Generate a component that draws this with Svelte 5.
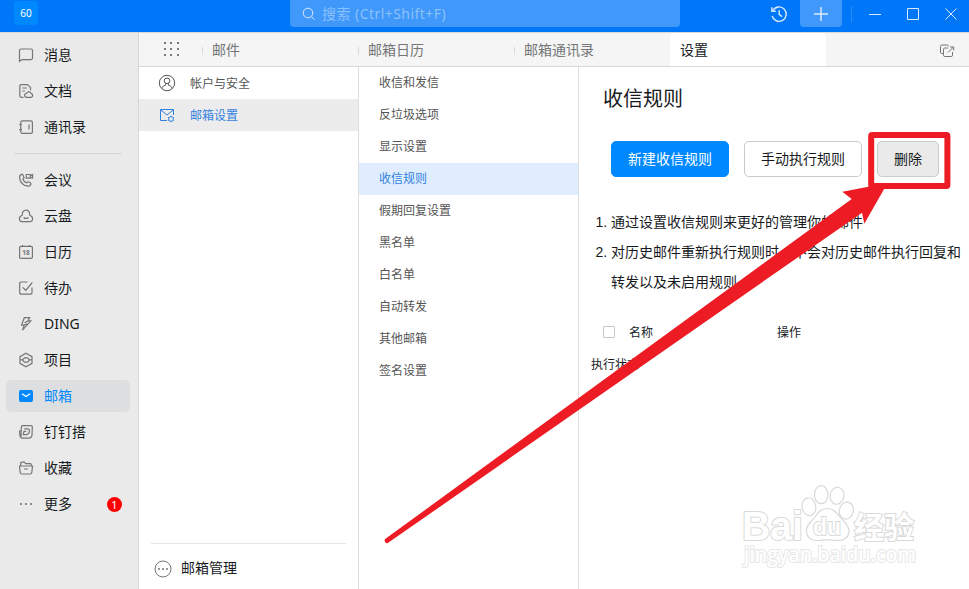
<script>
	const mainNav = [
		{ id: 'message', label: '消息' },
		{ id: 'doc', label: '文档' },
		{ id: 'contacts', label: '通讯录' }
	];

	const appNav = [
		{ id: 'meeting', label: '会议' },
		{ id: 'drive', label: '云盘' },
		{ id: 'calendar', label: '日历' },
		{ id: 'todo', label: '待办' },
		{ id: 'ding', label: 'DING' },
		{ id: 'project', label: '项目' },
		{ id: 'mail', label: '邮箱' },
		{ id: 'dingda', label: '钉钉搭' },
		{ id: 'favorite', label: '收藏' },
		{ id: 'more', label: '更多', badge: 1 }
	];

	const tabs = ['邮件', '邮箱日历', '邮箱通讯录', '设置'];

	const settings = [
		'收信和发信',
		'反垃圾选项',
		'显示设置',
		'收信规则',
		'假期回复设置',
		'黑名单',
		'白名单',
		'自动转发',
		'其他邮箱',
		'签名设置'
	];

	let activeNav = $state('mail');
	let activeTab = $state('设置');
	let activeSetting = $state('收信规则');
	let checked = $state(false);
</script>

{#snippet navIcon(id)}
	<svg class="nav-icon" viewBox="0 0 16 16" width="16" height="16">
		{#if id === 'message'}
			<path d="M1.5 14.3V3.5a1.5 1.5 0 0 1 1.5-1.5h10a1.5 1.5 0 0 1 1.5 1.5v7.6a1.5 1.5 0 0 1-1.5 1.5H4.2z" />
		{:else if id === 'doc'}
			<path d="M5.5 14.3H3.2a1.4 1.4 0 0 1-1.4-1.4V3a1.4 1.4 0 0 1 1.4-1.4h6.3l3 2.8v2.8M4.3 5h4.6M4.3 8h2.6" />
			<path d="M8.6 14.3a2 2 0 0 1 0-4 2.5 2.5 0 0 1 4.6.3 1.9 1.9 0 0 1 0 3.7z" />
		{:else if id === 'contacts'}
			<rect x="2.8" y="1.8" width="11.6" height="12.6" rx="1.6" />
			<path d="M11 5.6v5M1.2 5.5h2.6M1.2 10.6h2.6" />
		{:else if id === 'meeting'}
			<path d="M3.5 2.2c-1.5.8-2.2 2.2-1.8 4.1.7 4 3.8 7 7.7 7.8 1.6.2 3-.5 3.5-1.8.2-.5 0-.9-.4-1.2l-1.7-1.1c-.6-.4-1.1-.2-1.5.2l-.6.7C7 10.2 5.5 8.8 4.9 7.2l.8-.8c.4-.4.4-.9.1-1.4l-1-2.2c-.3-.6-.8-.8-1.3-.6z" />
			<path d="M8.3 2.5h4v3.6h-4zM12.3 3.8l2.3-1.2v3.5l-2.3-1" />
		{:else if id === 'drive'}
			<path d="M4.2 7.2C4.2 4 5.7 2.1 8 2.1s3.8 1.9 3.8 5.1c1.8.6 2.8 1.8 2.8 3.5 0 2-1.3 3-3.2 3H4.6c-1.9 0-3.2-1-3.2-3 0-1.7 1-2.9 2.8-3.5z" />
			<path d="M5.7 9.5c1.2 1.3 3.4 1.3 4.6 0" />
		{:else if id === 'calendar'}
			<rect x="1.6" y="2.4" width="12.8" height="12" rx="1.2" />
			<path d="M4.5 1v2M11.5 1v2" />
			<text x="8" y="11">18</text>
		{:else if id === 'todo'}
			<path d="M9.5 2H3a1.3 1.3 0 0 0-1.3 1.3v9.5A1.3 1.3 0 0 0 3 14.1h9.7a1.3 1.3 0 0 0 1.3-1.3V7.5M4.8 7.3l3 3 6.5-7.8" />
		{:else if id === 'ding'}
			<path d="M6.3 1.7h5.4L9.8 4.9h3L4.5 14.2l1.7-5.1H3.6zM9.8 4.9 6.600 6.700M6.200 9.100l2.800-1.300" />
		{:else if id === 'project'}
			<path d="M8 1.3 14 4.7v6.6L8 14.7 2 11.3V4.7zM2 7.5l2.7.5M14 7.5l-2.7.5" />
			<path d="M4.3 8 6.5 5.8h3L11.7 8 9.5 10.2h-3z" />
		{:else if id === 'mail'}
			<rect class="solid" x="1" y="2" width="14" height="12" rx="2" />
			<path class="flap" d="m4 5.7 4 2.8 4-2.8" />
		{:else if id === 'dingda'}
			<path d="M4.500 1.600h8.500a1.300 1.300 0 0 1 1.300 1.500l-.3 7.800a3.300 3.300 0 0 1-3.300 3.300H4.200a1.300 1.300 0 0 1-1.200-1.400l.4-10.100a1.100 1.100 0 0 1 1.100-1.100M3 13.500c-.7-.3-.9-.8-1-1.500l-.5-4.500c0-.6.400-.9 1.500-.9" />
			<path d="M6.200 4.800h3c2 0 2.600 1.200 2.200 2.900-.4 1.800-1.500 3-3.300 3H5.200l.8-3.300h2.300" />
		{:else if id === 'favorite'}
			<path d="M2.7 6V3.2c0-.7.4-1.1 1.1-1.1h2.5l1.4 1.5h4.5c.7 0 1.1.4 1.1 1.1V6" />
			<path d="M1.5 6h13l-.7 6.5c-.1 1-.7 1.5-1.6 1.5H3.8c-.9 0-1.5-.5-1.6-1.5zM6 9h4" />
		{:else if id === 'more'}
			<g class="dots"><circle cx="3" cy="8" r="1.1" /><circle cx="8" cy="8" r="1.1" /><circle cx="13" cy="8" r="1.1" /></g>
		{/if}
	</svg>
{/snippet}

{#snippet navItem(item)}
	<button class="nav-item" class:active={activeNav === item.id} onclick={() => (activeNav = item.id)}>
		{@render navIcon(item.id)}
		<span>{item.label}</span>
		{#if item.badge}
			<i class="badge">{item.badge}</i>
		{/if}
	</button>
{/snippet}

<div class="window">
	<header>
		<div class="logo">60</div>
		<div class="search">
			<svg viewBox="0 0 14 14" width="14" height="14">
				<circle cx="6" cy="6" r="4.8" />
				<path d="m9.5 9.7 3 3" />
			</svg>
			<span>搜索 (Ctrl+Shift+F)</span>
		</div>
		<div class="controls">
			<svg class="history" viewBox="0 0 18 18" width="18" height="18">
				<path d="M3 5.2A7.2 7.2 0 1 1 2.1 11M1.8 2.2v4h4M9.2 5.3v4l2.8 2.3" />
			</svg>
			<button class="add" aria-label="add">
				<svg viewBox="0 0 14 14" width="14" height="14"><path d="M7 0v14M0 7h14" /></svg>
			</button>
			<span class="split"></span>
			<svg class="win" viewBox="0 0 12 12" width="12" height="12"><path d="M0 6.5h12" /></svg>
			<svg class="win" viewBox="0 0 12 12" width="12" height="12"><path d="M.5.5h11v11H.5z" /></svg>
			<svg class="win" viewBox="0 0 12 12" width="12" height="12"><path d="m.5.5 11 11M11.5.5l-11 11" /></svg>
		</div>
	</header>

	<div class="body">
		<nav>
			{#each mainNav as item}
				{@render navItem(item)}
			{/each}
			<hr />
			{#each appNav as item}
				{@render navItem(item)}
			{/each}
		</nav>

		<div class="workspace">
			<div class="tabs">
				<div class="apps">
					<svg viewBox="0 0 15 14" width="15" height="14">
						{#each [0, 6, 12] as y}
							{#each [0, 6, 13] as x}
								<rect {x} {y} width="2" height="2" />
							{/each}
						{/each}
					</svg>
				</div>
				{#each tabs as tab}
					<button class="tab" class:active={activeTab === tab} onclick={() => (activeTab = tab)}>{tab}</button>
				{/each}
				<svg class="popout" viewBox="0 0 16 14" width="16" height="14">
					<path d="M4 9.5H2.8a1.3 1.3 0 0 1-1.3-1.3V2.3A1.3 1.3 0 0 1 2.8 1h5.4a1.3 1.3 0 0 1 1.3 1.3" />
					<path d="M9 4H5.8a1.3 1.3 0 0 0-1.3 1.3v6a1.3 1.3 0 0 0 1.3 1.2h6.4a1.3 1.3 0 0 0 1.3-1.3V8M9 8.5 14.5 3M11 3h3.7v3.5" />
				</svg>
			</div>

			<div class="columns">
				<aside class="accounts">
					<button class="row">
						<svg viewBox="0 0 18 18" width="18" height="18">
							<circle cx="9" cy="9" r="7.7" />
							<circle cx="9" cy="6.8" r="2.8" />
							<path d="M4 14.500c.3-2 1.500-2.800 3.600-3.300v-2M14 14.500c-.3-2-1.500-2.800-3.600-3.300v-2" />
						</svg>
						<span>帐户与安全</span>
					</button>
					<button class="row active">
						<svg viewBox="0 0 18 18" width="18" height="18">
							<path d="M9 14.500H2.500V3.500h13v5.500M2.800 4l6.200 5 6.200-5" />
							<circle cx="13" cy="13" r="2.4" />
							<path d="M13 9.800v.8M13 15.400v.8M10.200 11.400l.7.400M15.100 14.200l.7.400M10.200 14.600l.7-.4M15.100 11.800l.7-.4" />
						</svg>
						<span>邮箱设置</span>
					</button>
					<div class="manage">
						<svg viewBox="0 0 18 18" width="18" height="18">
							<circle cx="9" cy="9" r="8" />
							<g class="dots"><circle cx="5" cy="9" r="1" /><circle cx="9" cy="9" r="1" /><circle cx="13" cy="9" r="1" /></g>
						</svg>
						<span>邮箱管理</span>
					</div>
				</aside>

				<aside class="settings">
					{#each settings as item}
						<button class:active={activeSetting === item} onclick={() => (activeSetting = item)}>{item}</button>
					{/each}
				</aside>

				<main>
					<h1>收信规则</h1>
					<div class="actions">
						<button class="primary">新建收信规则</button>
						<button>手动执行规则</button>
						<button class="disabled">删除</button>
					</div>
					<ol>
						<li>通过设置收信规则来更好的管理你的邮件</li>
						<li>对历史邮件重新执行规则时，不会对历史邮件执行回复和转发以及未启用规则。</li>
					</ol>
					<div class="table-head">
						<input type="checkbox" bind:checked />
						<span class="name">名称</span>
						<span>操作</span>
					</div>
					<div class="status">执行状态</div>
				</main>
			</div>
		</div>
	</div>

	<!-- watermark and pointer drawn over the page -->
	<svg class="overlay" viewBox="0 0 969 589" width="969" height="589">
		<g class="watermark">
			<text class="latin" x="742" y="540" font-size="40" textLength="61" lengthAdjust="spacingAndGlyphs">Bai</text>
			<ellipse cx="809" cy="506.700" rx="6.800" ry="9" transform="rotate(-8 809 507)" />
			<ellipse cx="821.2" cy="494.7" rx="6.800" ry="9" />
			<ellipse cx="837" cy="495.7" rx="6.900" ry="8.600" transform="rotate(10 837 496)" />
			<ellipse cx="846.500" cy="510.500" rx="7" ry="8.500" transform="rotate(14 846 510)" />
			<path d="M827 508.500c-6 0-9 4-12 8.500-4 5-9 8-8.500 14.500.5 6.500 5 9 11 9 4 0 6-.8 9.500-.8s6 .8 10 .8c7 0 11.500-3 12-9 .5-6-5-9.500-9-14.500-3.500-4.500-6.500-8.500-13-8.500z" />
			<text class="latin" x="813" y="535" font-size="24" textLength="28" lengthAdjust="spacingAndGlyphs">du</text>
			<text class="cjk" x="854" y="537.500" font-size="30">经验</text>
			<text class="site" x="744" y="562" font-size="21" textLength="172" lengthAdjust="spacingAndGlyphs">jingyan.baidu.com</text>
		</g>
		<path class="arrow" d="M385.800 538.600 851.700 199 842.300 191.700 868.300 186.800 885.500 184 884.700 188 864.300 223.700 862 212.700 388.500 542.600A2.400 2.400 0 0 1 385.800 538.600z" />
		<rect class="frame" x="871.2" y="135" width="76.2" height="51" rx="1" />
	</svg>
</div>

<style>
	:global(body) {
		margin: 0;
		overflow: hidden;
	}

	.window {
		position: relative;
		display: flex;
		flex-direction: column;
		width: 969px;
		height: 589px;
		background: #fff;
		color: #171a1d;
		font-family: 'Noto Sans', 'Noto Sans CJK SC', sans-serif;
		font-size: 14px;
		overflow: hidden;
	}

	button {
		border: 0;
		padding: 0;
		background: none;
		color: inherit;
		font: inherit;
		text-align: left;
	}

	svg {
		flex: none;
		fill: none;
		stroke: currentColor;
	}

	/* Title bar */
	header {
		flex: none;
		display: flex;
		align-items: flex-start;
		height: 32px;
		border-bottom: 1px solid #d6d9dd;
		background: #0076f8;
		color: #d9eafe;
	}

	.logo {
		flex: none;
		width: 24px;
		height: 24px;
		margin: 1px 252px 0 14px;
		border-radius: 4px;
		background: #0089ff;
		color: #fff;
		font-size: 10px;
		line-height: 24px;
		text-align: center;
	}

	.search {
		flex: none;
		display: flex;
		align-items: center;
		gap: 6px;
		box-sizing: border-box;
		width: 390px;
		height: 27px;
		padding-left: 12px;
		border-radius: 0 0 4px 4px;
		background: #3f98fa;
	}

	.search span {
		padding-bottom: 2px;
		color: #8cc1fc;
		letter-spacing: 0.45px;
	}

	.controls {
		display: flex;
		align-items: center;
		height: 27px;
		margin-left: 90px;
	}

	.history {
		margin-right: 12px;
		stroke-width: 1.4;
	}

	.add {
		display: grid;
		place-items: center;
		width: 42px;
		height: 27px;
		border-radius: 0 0 4px 4px;
		background: #3f98fa;
	}

	.add svg {
		stroke-width: 1.5;
	}

	.split {
		width: 1px;
		height: 16px;
		margin: 0 17px 0 9px;
		background: #2b8cf9;
	}

	.win {
		margin-top: 1px;
		margin-right: 26px;
	}

	.body {
		display: flex;
		flex: 1;
		min-height: 0;
	}

	/* Left navigation */
	nav {
		flex: none;
		display: flex;
		flex-direction: column;
		gap: 4px;
		box-sizing: border-box;
		width: 139px;
		padding: 6px 8px 0 6px;
		border-right: 1px solid #d6d7d8;
		background: #eaeaea;
	}

	nav hr {
		width: 108px;
		height: 1px;
		margin: 6px 0 6px 8px;
		border: 0;
		background: #d5d5d5;
	}

	.nav-item {
		display: flex;
		align-items: center;
		gap: 10px;
		height: 32px;
		padding: 0 8px 0 12px;
		border-radius: 5px;
	}

	.nav-item span,
	.manage span {
		padding-bottom: 2px;
	}

	.nav-item.active {
		background: #dddee0;
		color: #0089ff;
	}

	.nav-icon {
		color: #747677;
		stroke-width: 1.2;
	}

	.nav-icon text {
		fill: currentColor;
		stroke: none;
		font-size: 6.5px;
		font-weight: bold;
		text-anchor: middle;
	}

	.solid {
		fill: #0089ff;
		stroke: none;
	}

	.flap {
		stroke: #fff;
		stroke-width: 1.3;
	}

	.dots {
		fill: currentColor;
		stroke: none;
	}

	.badge {
		width: 15px;
		height: 15px;
		margin-left: auto;
		border-radius: 50%;
		background: #f00;
		color: #fff;
		font-size: 11px;
		font-style: normal;
		line-height: 15px;
		text-align: center;
	}

	.workspace {
		display: flex;
		flex-direction: column;
		flex: 1;
		min-width: 0;
	}

	/* Tabs */
	.tabs {
		flex: none;
		display: flex;
		align-items: center;
		height: 33px;
		border-bottom: 1px solid #d8d8d8;
		background: #f5f5f5;
		color: #747677;
	}

	.apps {
		display: flex;
		box-sizing: border-box;
		width: 63px;
		padding: 0 0 1px 25px;
	}

	.apps svg rect {
		fill: #7d7779;
		stroke: none;
	}

	.tab {
		position: relative;
		width: 156px;
		height: 33px;
		padding: 0 0 2px 10px;
	}

	.tab::before {
		content: '';
		position: absolute;
		top: 14px;
		left: 0;
		width: 1px;
		height: 8px;
		background: #d8d8d8;
	}

	.tab.active {
		border-radius: 5px 5px 0 0;
		background: #fff;
		color: #171a1d;
	}

	.tab.active::before {
		display: none;
	}

	.popout {
		margin: 2px 14px 0 auto;
	}

	.columns {
		display: flex;
		flex: 1;
		min-height: 0;
	}

	aside {
		flex: none;
		display: flex;
		flex-direction: column;
		box-sizing: border-box;
		width: 220px;
		border-right: 1px solid #dedede;
		color: #555;
		font-size: 12px;
	}

	.row {
		display: flex;
		align-items: center;
		gap: 14px;
		height: 32px;
		padding-left: 19px;
	}

	.row span {
		padding-bottom: 1px;
	}

	.row.active {
		background: #ececec;
		color: #3182df;
	}

	.manage {
		display: flex;
		align-items: center;
		gap: 9px;
		height: 49px;
		margin: auto 12px -4px;
		padding-left: 3px;
		border-top: 1px solid #e5e5e5;
		color: #171a1d;
		font-size: 14px;
	}

	.manage svg {
		color: #747677;
	}

	.manage span {
		padding-bottom: 3px;
	}

	.settings button {
		height: 32px;
		padding: 0 0 2px 20px;
	}

	.settings .active {
		background: #e0edfe;
		color: #3182df;
	}

	/* Rule page */
	main {
		flex: 1;
		min-width: 0;
	}

	h1 {
		margin: 17px 0 27px 24px;
		font-size: 20px;
		font-weight: 400;
		line-height: 30px;
	}

	.actions {
		display: flex;
		gap: 15px;
		margin-left: 32px;
	}

	.actions button {
		height: 36px;
		padding: 0 16px 2px;
		border: 1px solid #c9cacb;
		border-radius: 5px;
		text-align: center;
	}

	.actions .primary {
		border-color: #0089ff;
		background: #0089ff;
		color: #fff;
	}

	.actions .disabled {
		background: #eaeaea;
	}

	ol {
		width: 350px;
		margin: 30px 0 0 32px;
		padding: 0;
		line-height: 30px;
		font-family: 'Liberation Sans', 'Noto Sans CJK SC', sans-serif;
	}

	.table-head {
		display: flex;
		align-items: center;
		height: 32px;
		margin: 19px 0 1px 24px;
		font-size: 12px;
	}

	.table-head input {
		appearance: none;
		box-sizing: border-box;
		width: 12px;
		height: 12px;
		margin: 0 14px 0 0;
		border: 1px solid #c4c6c8;
		border-radius: 1px;
	}

	.name {
		width: 148px;
	}

	.status {
		margin-left: 12px;
		font-size: 12px;
		line-height: 32px;
	}

	.overlay {
		position: absolute;
		top: 0;
		left: 0;
		pointer-events: none;
	}

	.arrow {
		fill: #ed1c24;
		stroke: none;
	}

	.frame {
		stroke: #ed1c24;
		stroke-width: 6;
		stroke-linejoin: round;
	}

	.watermark {
		fill: #fff;
		stroke: #d9d9d9;
		stroke-width: 1.2;
	}

	.watermark text {
		font-weight: 700;
		paint-order: stroke;
		stroke-width: 2;
	}

	.latin {
		font-family: 'Liberation Sans', sans-serif;
	}

	.cjk {
		font-family: 'Noto Sans CJK SC', sans-serif;
	}

	.watermark .site {
		font-family: 'Open Sans', sans-serif;
		font-weight: 600;
		stroke: #e6e6e6;
	}
</style>
